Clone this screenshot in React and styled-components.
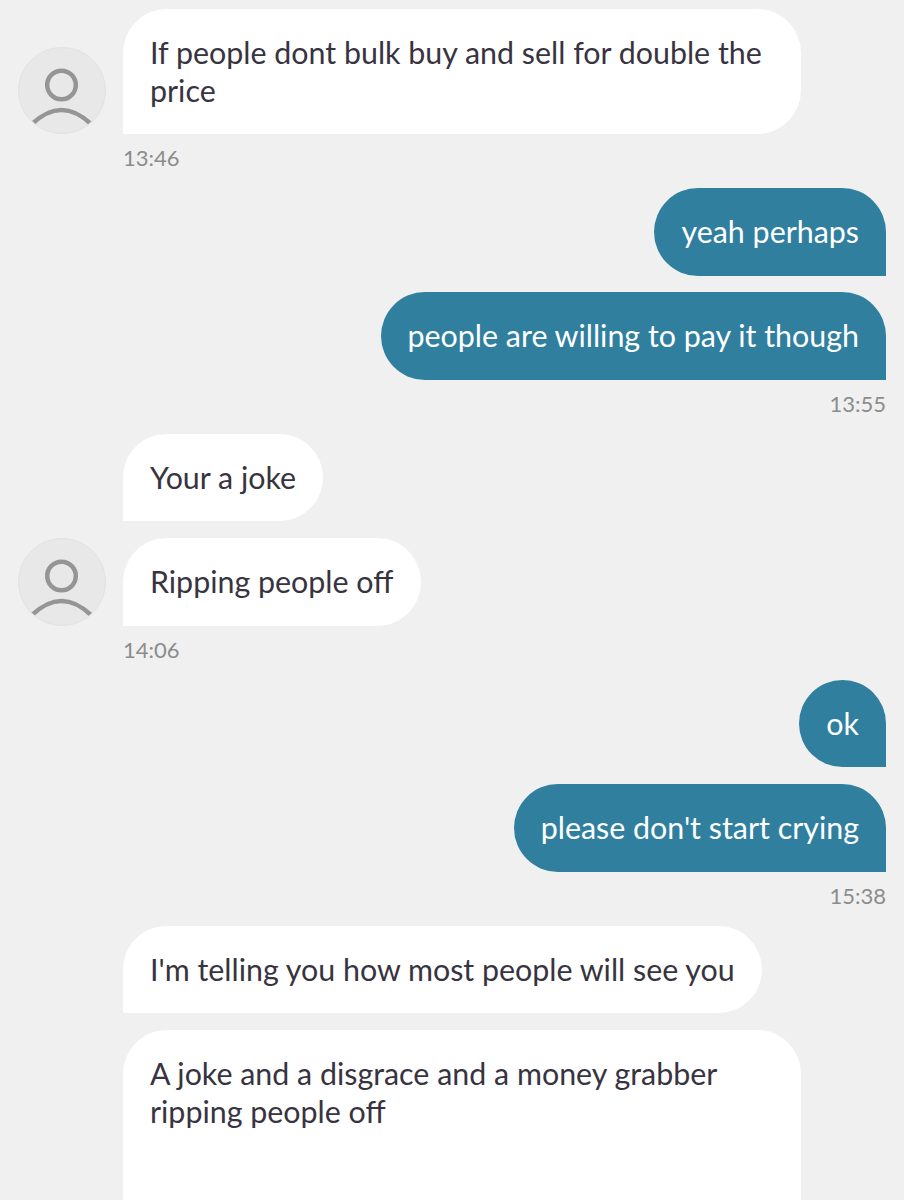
import React from 'react'
import styled, { createGlobalStyle } from 'styled-components'

const Global = createGlobalStyle`
  html, body { margin: 0; padding: 0; background: #f0f0f0; }
`

const Thread = styled.div`
  display: flex;
  flex-direction: column;
  gap: 17px;
  box-sizing: border-box;
  height: 1200px;
  overflow: hidden;
  padding: 9px 18px 0 18px;
  font-family: Lato, sans-serif;
`

const Group = styled.div`
  display: flex;
  flex: none;
  flex-direction: column;
`

const Bubbles = styled.div`
  display: flex;
  flex-direction: column;
  gap: 16.9px;
`

const Row = styled.div`
  display: flex;
  justify-content: ${p => (p.$mine ? 'flex-end' : 'flex-start')};
  align-items: flex-end;
  padding-left: ${p => (p.$mine || p.$avatar ? 0 : 105)}px;
`

const AvatarCircle = styled.div`
  width: 87.5px;
  height: 87.5px;
  margin-right: 17.5px;
  flex: none;
  border-radius: 50%;
  background: #e8e8e8;
  border: 1px solid #e2e2e2;
  box-sizing: border-box;
  overflow: hidden;
`

const Bubble = styled.div`
  box-sizing: border-box;
  width: ${p => (p.$wide ? '678px' : 'auto')};
  height: ${p => p.$height || 87.5}px;
  padding: 24px 27px 0 27px;
  font-size: 30.4px;
  line-height: 38px;
  color: ${p => (p.$mine ? '#ffffff' : '#37343f')};
  background: ${p => (p.$mine ? '#307f9f' : '#ffffff')};
  border-radius: ${p => (p.$mine ? '44px 44px 0 44px' : '44px 44px 44px 0')};
`

const Time = styled.div`
  font-size: 22px;
  line-height: 26px;
  color: #8c8c8c;
  margin-top: 11px;
  padding-left: ${p => (p.$mine ? 0 : 105)}px;
  text-align: ${p => (p.$mine ? 'right' : 'left')};
`

const Avatar = () => (
  <AvatarCircle>
    <svg width="86" height="86" viewBox="0 0 86 86" fill="none" stroke="#959595" strokeWidth="4.5">
      <circle cx="42.5" cy="37" r="14.3" />
      <path d="M13 76 Q42.5 48 72 76" />
    </svg>
  </AvatarCircle>
)

export default function App() {
  return (
    <>
      <Global />
      <Thread>
        <Group>
          <Row $avatar>
            <Avatar />
            <Bubble $wide $height={125}>
              If people dont bulk buy and sell for double the price
            </Bubble>
          </Row>
          <Time>13:46</Time>
        </Group>
        <Group>
          <Bubbles>
            <Row $mine><Bubble $mine>yeah perhaps</Bubble></Row>
            <Row $mine><Bubble $mine>people are willing to pay it though</Bubble></Row>
          </Bubbles>
          <Time $mine>13:55</Time>
        </Group>
        <Group>
          <Bubbles>
            <Row><Bubble>Your a joke</Bubble></Row>
            <Row $avatar>
              <Avatar />
              <Bubble>Ripping people off</Bubble>
            </Row>
          </Bubbles>
          <Time>14:06</Time>
        </Group>
        <Group>
          <Bubbles>
            <Row $mine><Bubble $mine>ok</Bubble></Row>
            <Row $mine><Bubble $mine>please don't start crying</Bubble></Row>
          </Bubbles>
          <Time $mine>15:38</Time>
        </Group>
        <Group>
          <Bubbles>
            <Row><Bubble>I'm telling you how most people will see you</Bubble></Row>
            <Row>
              <Bubble $wide $height={240}>
                A joke and a disgrace and a money grabber ripping people off
              </Bubble>
            </Row>
          </Bubbles>
        </Group>
      </Thread>
    </>
  )
}
